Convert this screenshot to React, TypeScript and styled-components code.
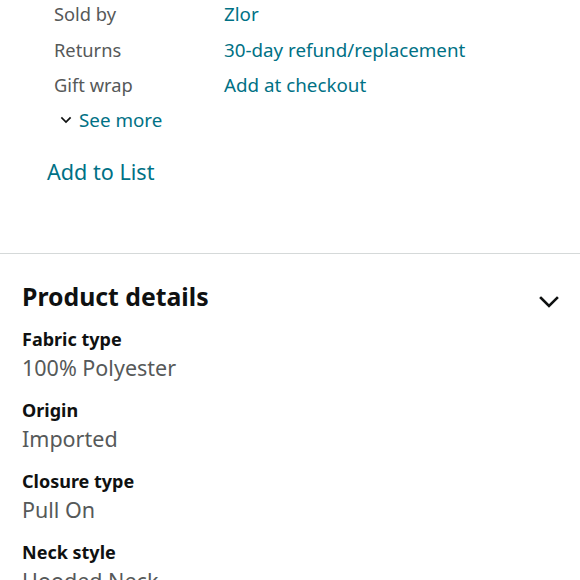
import React from "react";
import styled, { createGlobalStyle } from "styled-components";

const Global = createGlobalStyle`
  html, body { margin: 0; padding: 0; background: #fff; }
  body { font-family: "Noto Sans", "Open Sans", sans-serif; overflow: hidden; }
`;

const Page = styled.div`
  width: 580px;
  height: 580px;
  overflow: hidden;
  background: #fff;
`;

const Top = styled.section`
  padding: 0 0 0 47px;
  height: 252px;
  box-sizing: border-box;
`;

const InfoGrid = styled.div`
  display: grid;
  grid-template-columns: 170px 1fr;
  padding-left: 7px;
  row-gap: 9.5px;
  margin-top: 1px;
`;

const Label = styled.span`
  font-size: 18.3px;
  line-height: 26px;
  color: #565959;
`;

const LinkText = styled.a<{ $size?: number }>`
  font-size: ${(p) => p.$size ?? 18.8}px;
  line-height: 26px;
  color: #007185;
  text-decoration: none;
`;

const SeeMore = styled.div`
  display: flex;
  align-items: center;
  gap: 7px;
  padding-left: 13px;
  margin-top: 9px;
`;

const AddToList = styled.div`
  margin-top: 26px;
`;

const Divider = styled.hr`
  margin: 0;
  border: none;
  border-top: 1px solid #d5d9d9;
`;

const Details = styled.section`
  padding: 23px 19px 0 22px;
`;

const Header = styled.div`
  display: flex;
  justify-content: space-between;
  align-items: center;
  margin-bottom: 11px;
`;

const Title = styled.h2`
  margin: 0;
  font-size: 24.8px;
  font-weight: 700;
  line-height: 38px;
  color: #0f1111;
`;

const Item = styled.div`
  margin-bottom: 13px;
`;

const ItemLabel = styled.div`
  font-size: 18px;
  font-weight: 700;
  color: #0f1111;
  line-height: 26px;
`;

const ItemValue = styled.div`
  font-size: 21.5px;
  color: #565959;
  line-height: 32px;
`;

const ChevronBox = styled.span<{ $shift: number }>`
  display: inline-flex;
  margin-top: ${(p) => p.$shift}px;
`;

const Chevron = ({ size, stroke, shift = 0 }: { size: number; stroke: number; shift?: number }) => (
  <ChevronBox $shift={shift}>
    <svg width={size} height={size} viewBox="0 0 24 24" fill="none">
      <path d="M4 8 L12 16 L20 8" stroke="#0f1111" strokeWidth={stroke} strokeLinecap="square" />
    </svg>
  </ChevronBox>
);

const info = [
  ["Sold by", "Zlor"],
  ["Returns", "30-day refund/replacement"],
  ["Gift wrap", "Add at checkout"],
];

const details = [
  ["Fabric type", "100% Polyester"],
  ["Origin", "Imported"],
  ["Closure type", "Pull On"],
  ["Neck style", "Hooded Neck"],
];

export default function App() {
  return (
    <Page>
      <Global />
      <Top>
        <InfoGrid>
          {info.map(([l, v]) => (
            <React.Fragment key={l}>
              <Label>{l}</Label>
              <LinkText>{v}</LinkText>
            </React.Fragment>
          ))}
        </InfoGrid>
        <SeeMore>
          <Chevron size={12} stroke={3.5} />
          <LinkText>See more</LinkText>
        </SeeMore>
        <AddToList>
          <LinkText $size={21.6}>Add to List</LinkText>
        </AddToList>
      </Top>
      <Divider />
      <Details>
        <Header>
          <Title>Product details</Title>
          <Chevron size={24} stroke={2.6} shift={12} />
        </Header>
        {details.map(([l, v]) => (
          <Item key={l}>
            <ItemLabel>{l}</ItemLabel>
            <ItemValue>{v}</ItemValue>
          </Item>
        ))}
      </Details>
    </Page>
  );
}
